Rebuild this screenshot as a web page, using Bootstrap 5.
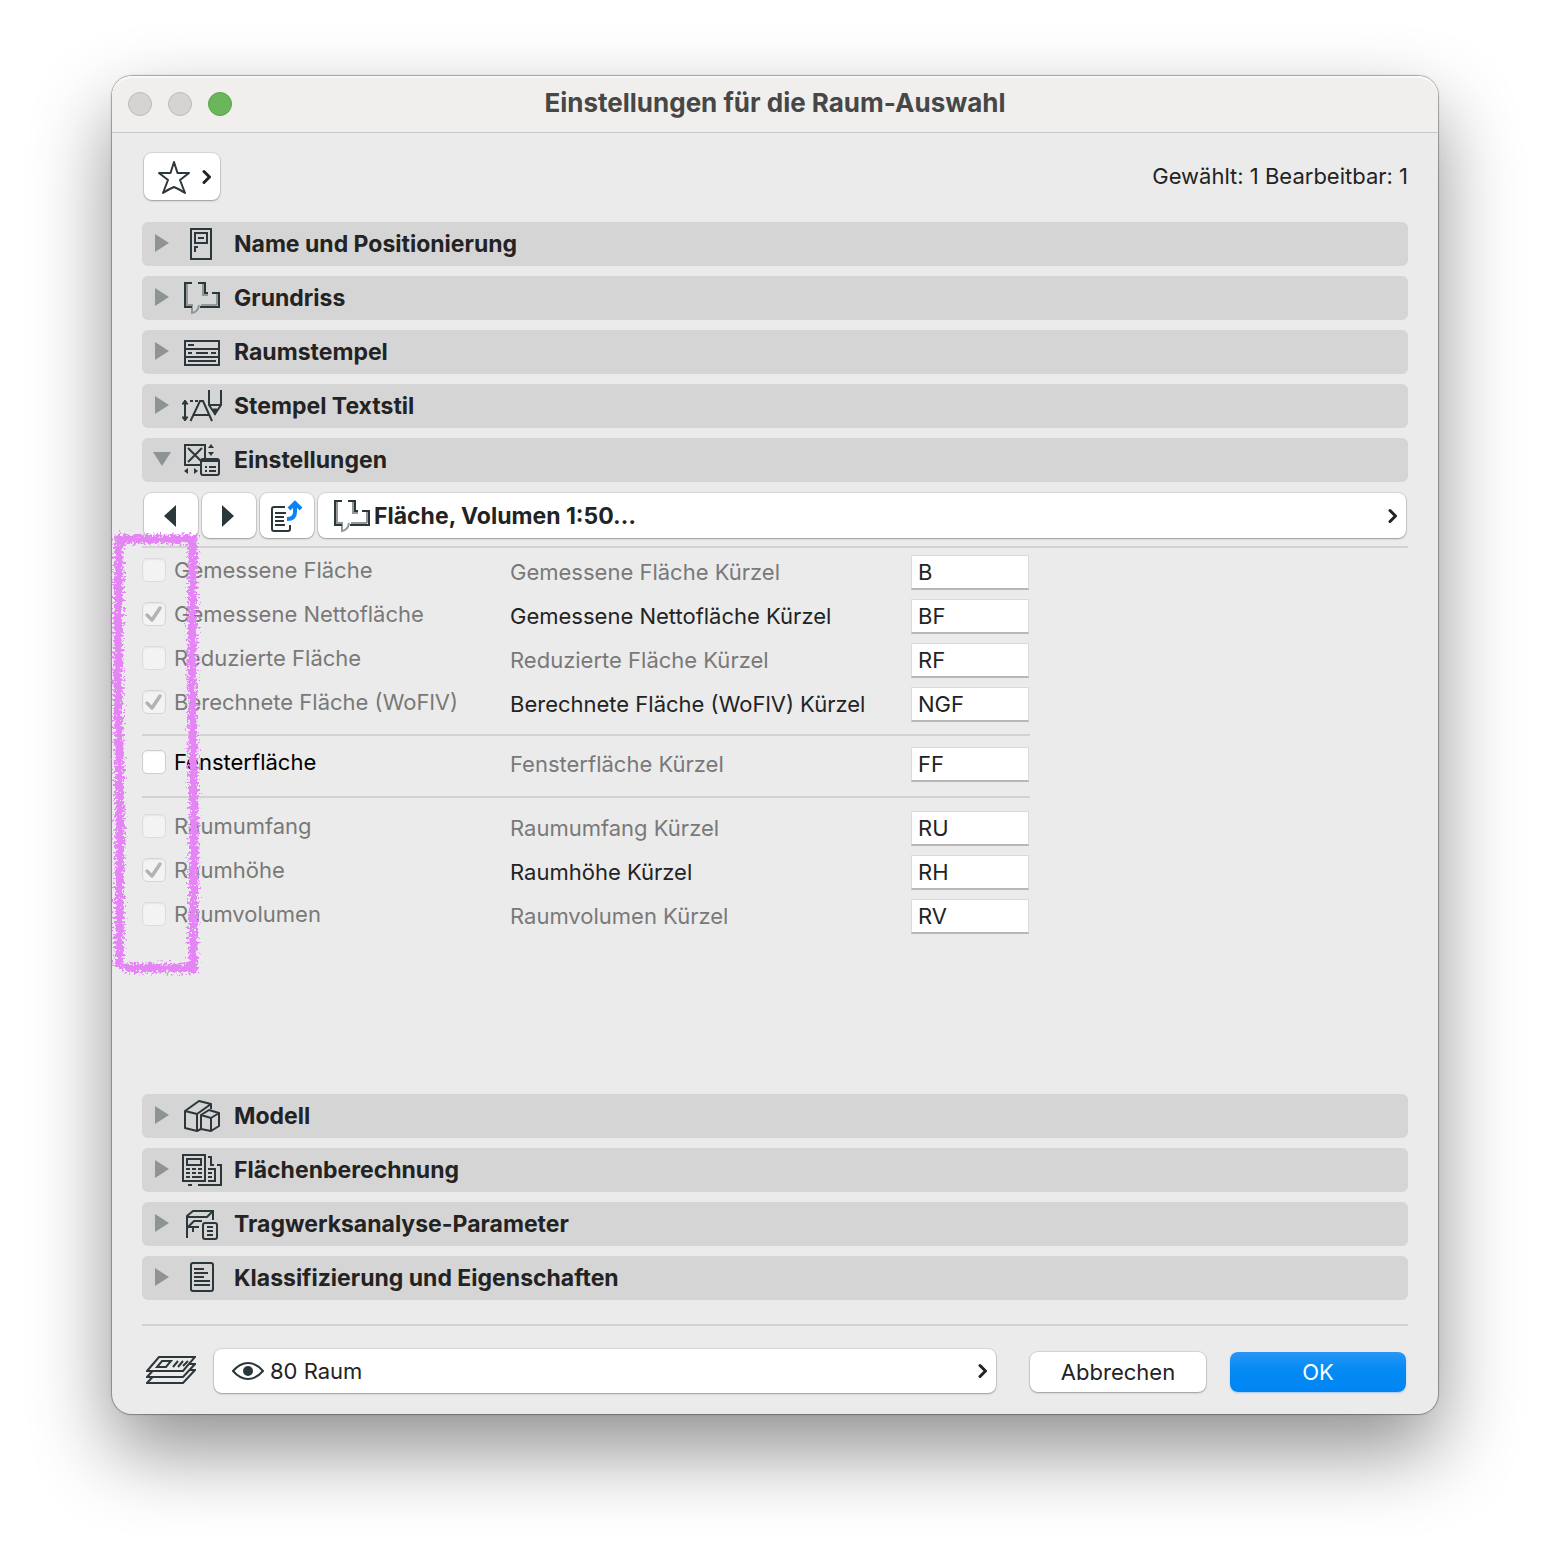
<!DOCTYPE html>
<html lang="de">
<head>
<meta charset="utf-8">
<meta name="viewport" content="width=device-width, initial-scale=1">
<title>Einstellungen für die Raum-Auswahl</title>
<link href="https://cdn.jsdelivr.net/npm/bootstrap@5.3.0/dist/css/bootstrap.min.css" rel="stylesheet">
<style>
  body { font-family: Inter, "Liberation Sans", sans-serif; font-size: 22px; line-height: 28px; color: #232323; background: #fff; padding: 76px 112px 148px; }
  .dialog { background: #ebebeb; border-radius: 20px; box-shadow: 0 0 0 1px rgba(0,0,0,.22), 0 0 3px rgba(0,0,0,.25), 0 36px 80px rgba(0,0,0,.44); }
  .titlebar { height: 57px; padding: 0 16px; background: #f0efed; border-bottom: 1px solid #c6c7c7; border-radius: 20px 20px 0 0; box-shadow: inset 0 2px 0 #f9f8f7; }
  .titlebar h1 { font-size: 26px; line-height: 32px; font-weight: 650; color: #474747; padding-bottom: 2px; }
  .light { width: 24px; height: 24px; border-radius: 50%; background: #d5d4d2; border: 1px solid #bcbbb9; padding: 0; }
  .light-zoom { background: #69b75a; border-color: #57a34a; }
  .lights { gap: 16px; width: 120px; }
  .dialog-body { padding: 20px 30px 21px; }
  .ctl { background: #fff; border: 0; border-radius: 8px; color: #232323; box-shadow: 0 0 0 1px rgba(0,0,0,.09), 0 1px 2px rgba(0,0,0,.28); padding: 0; }
  .fav { width: 76px; height: 47px; padding: 2px 8px 0 13px; margin-left: 2px; }
  .top-row { height: 46px; margin-bottom: 23px; }
  .bar { height: 44px; width: 100%; border: 0; border-radius: 6px; background: #d5d5d5; color: #232323; font-size: 23px; font-weight: 650; padding: 0 12px; text-align: left; }
  .bar .tri { width: 16px; height: 22px; padding-bottom: 2px; margin-right: 12px; flex: none; overflow: visible; }
  .bar .ico { width: 40px; height: 36px; margin-right: 12px; flex: none; }
  .stack { gap: 10px; }
  svg { display: block; }
  .ico, .line { fill: none; stroke: #2c373c; stroke-width: 2; }
  .tools { height: 46px; gap: 4px; padding: 0 2px; margin: 11px 0 7px; }
  .tool { width: 54px; height: 45px; }
  .page-pick { height: 45px; font-size: 23px; font-weight: 650; padding: 0 8px 0 14px; }
  .page-pick .ico { width: 42px; height: 36px; padding-right: 2px; }
  .rule { height: 2px; margin: 0; border: 0; background: #d2d2d2; opacity: 1; }
  .params { padding-top: 2px; padding-bottom: 156px; }
  .param-list { max-width: 888px; }
  .prow { height: 44px; }
  .prow .c1 { width: 368px; gap: 8px; padding-bottom: 4px; }
  .prow .c2 { width: 401px; }
  .off, .prow .c1.off label { color: #797979; }
  .on label { color: #000; }
  .box.form-check-input { width: 24px; height: 24px; margin: 0; border-radius: 5px; border: 1px solid #dcdcdc; background-color: #f3f3f3; opacity: 1; box-shadow: inset 0 1px 2px rgba(0,0,0,.06); }
  .box.form-check-input:disabled ~ label { opacity: 1; }
  .on .box.form-check-input { background-color: #fff; border-color: #cdcdcd; }
  .box.form-check-input:checked { background-color: #f3f3f3; border-color: #d6d6d6; background-size: 22px 22px; background-position: center; background-image: url("data:image/svg+xml,%3Csvg xmlns='http://www.w3.org/2000/svg' viewBox='0 0 22 22'%3E%3Cpath d='M4 12l5 5 8-12' fill='none' stroke='%23b3b3b3' stroke-width='3.500' stroke-linecap='round' stroke-linejoin='round'/%3E%3C/svg%3E"); }
  .abbr.form-control { width: 118px; height: 35px; padding: 0 6px; border: 1px solid #dadada; border-bottom: 2px solid #b7b7b7; border-radius: 0; background: #fff; color: #232323; font-size: 22px; line-height: 28px; }
  .sep-a { margin: 8px 0 6px; }
  .sep-b { margin: 10px 0 8px; }
  .foot { margin-top: 23px; padding: 0 2px 0 4px; }
  .layer { height: 44px; padding: 0 8px 0 18px; margin: 0 34px 0 18px; gap: 6px; }
  .act { width: 176px; height: 40px; }
  .acts { gap: 24px; padding-top: 2px; }
  .act-ok { color: #fff; background: linear-gradient(#2896f6, #038af5 45%, #0185f2); box-shadow: 0 1px 2px rgba(0,122,255,.3); }
  /* hand-drawn highlight lying over the tick boxes */
  .marker { position: absolute; left: -8px; top: 446px; pointer-events: none; }
</style>
</head>
<body>
<svg width="0" height="0" class="position-absolute" aria-hidden="true">
  <defs>
    <symbol id="tri-r" viewBox="0 0 16 20"><path d="M1 1L15 10L1 19Z" fill="#8e9396" stroke="none"/></symbol>
    <symbol id="chev" viewBox="0 0 10 16"><path d="M2 2.500L7.500 8L2 13.500" fill="none" stroke="#232323" stroke-width="3" stroke-linecap="round" stroke-linejoin="round"/></symbol>
    <symbol id="plan" viewBox="0 0 40 36">
      <path d="M5 4V25H11M21 4V15H26M35 14V25M19 25H35M10 25V33Q16 32 17 25" stroke="#93999b"/>
      <path d="M10 3H3V27H10M16 3H23V13H26M30 13H37V27H18"/>
    </symbol>
  </defs>
</svg>

<main class="dialog position-relative">
  <header class="titlebar d-flex align-items-center">
    <div class="lights d-flex">
      <button class="light" type="button" aria-label="Schließen"></button>
      <button class="light" type="button" aria-label="Minimieren"></button>
      <button class="light light-zoom" type="button" aria-label="Vergrößern"></button>
    </div>
    <h1 class="flex-grow-1 text-center m-0">Einstellungen für die Raum-Auswahl</h1>
    <div class="lights"></div>
  </header>

  <div class="dialog-body">
    <div class="top-row d-flex justify-content-between align-items-center">
      <button class="ctl fav d-flex align-items-center justify-content-between" type="button" aria-label="Favoriten">
        <svg class="line" width="34" height="34" viewBox="0 0 34 34"><path d="M17 2L20.500 13H32L23 20L28 33Q22 29 17 27Q12 29 6 33L11 20L2 13H13.500Z" stroke-linejoin="round"/></svg>
        <svg width="10" height="16"><use href="#chev"/></svg>
      </button>
      <div>Gewählt: 1 Bearbeitbar: 1</div>
    </div>

    <div class="stack d-flex flex-column">
      <button class="bar d-flex align-items-center" type="button" aria-expanded="false">
        <svg class="tri"><use href="#tri-r"/></svg>
        <svg class="ico" viewBox="0 0 40 36"><path d="M9 3H29V33H9ZM13 7H25V17H13ZM16 12H22M13 26V21H16"/></svg>
        Name und Positionierung</button>
      <button class="bar d-flex align-items-center" type="button" aria-expanded="false">
        <svg class="tri"><use href="#tri-r"/></svg>
        <svg class="ico"><use href="#plan"/></svg>
        Grundriss</button>
      <button class="bar d-flex align-items-center" type="button" aria-expanded="false">
        <svg class="tri"><use href="#tri-r"/></svg>
        <svg class="ico" viewBox="0 0 40 36"><path d="M3 7H37V31H3ZM3 15H37M3 23H37M6 11H12M6 19H10M14 19H26M29 19H34M6 27H34"/></svg>
        Raumstempel</button>
      <button class="bar d-flex align-items-center" type="button" aria-expanded="false">
        <svg class="tri"><use href="#tri-r"/></svg>
        <svg class="ico" viewBox="0 0 40 36"><path d="M3 13V32M8 13H11M13 13H16M8.500 33L18 13H21L30 33M12 27H27M27 2V17L33 26L39 17V2M27 17H39"/><path d="M0 16L3 12L6 16ZM0 29L3 33L6 29ZM31 21H35L33 27Z" fill="#2c373c" stroke-width="1"/></svg>
        Stempel Textstil</button>
      <button class="bar d-flex align-items-center" type="button" aria-expanded="true">
        <svg class="tri" viewBox="0 0 16 20"><path d="M-1 3H17L8 17Z" fill="#8e9396"/></svg>
        <svg class="ico" viewBox="0 0 40 36"><path d="M3 3H23V23H3ZM6 6L20 20M20 6L6 20"/><rect x="19" y="17" width="18" height="16" rx="2" fill="#d5d5d5"/><path d="M19 19H37M23 25H25M27 25H34M23 29H25M27 29H34"/><path d="M26 6L29 2L32 6ZM26 10H32L29 14ZM6 26V32L2 29ZM12 26V32L16 29Z" fill="#2c373c" stroke="none"/></svg>
        Einstellungen</button>
    </div>

    <div class="tools d-flex">
      <button class="ctl tool d-flex align-items-center justify-content-center" type="button" aria-label="Vorherige Seite"><svg width="16" height="22"><path d="M13 0V22L1 11Z" fill="#2c373c"/></svg></button>
      <button class="ctl tool d-flex align-items-center justify-content-center" type="button" aria-label="Nächste Seite"><svg width="16" height="22"><path d="M1 0V22L13 11Z" fill="#2c373c"/></svg></button>
      <button class="ctl tool d-flex align-items-center justify-content-center" type="button" aria-label="Seite übertragen">
        <svg class="line" width="34" height="34" viewBox="0 0 34 34"><path d="M15 8H4Q2 8 2 10V30Q2 32 4 32H18Q20 32 20 30V26M5 14H16M5 18H14M5 22H14M5 26H15"/><path d="M17 20Q25 20 25 13V6M19 10L25 4L31 10" stroke="#0a84f5" stroke-width="4"/></svg>
      </button>
      <button class="ctl page-pick flex-grow-1 d-flex align-items-center" type="button">
        <svg class="ico"><use href="#plan"/></svg>
        Fläche, Volumen 1:50…
        <svg class="ms-auto" width="10" height="16"><use href="#chev"/></svg>
      </button>
    </div>
    <hr class="rule">

    <div class="params">
      <div class="param-list">
        <div class="prow d-flex align-items-center"><div class="c1 off d-flex align-items-center"><input class="form-check-input box" type="checkbox" id="k1" disabled><label for="k1">Gemessene Fläche</label></div><label class="c2 off" for="a1">Gemessene Fläche Kürzel</label><input class="form-control abbr" id="a1" type="text" value="B"></div>
        <div class="prow d-flex align-items-center"><div class="c1 off d-flex align-items-center"><input class="form-check-input box" type="checkbox" id="k2" checked disabled><label for="k2">Gemessene Nettofläche</label></div><label class="c2" for="a2">Gemessene Nettofläche Kürzel</label><input class="form-control abbr" id="a2" type="text" value="BF"></div>
        <div class="prow d-flex align-items-center"><div class="c1 off d-flex align-items-center"><input class="form-check-input box" type="checkbox" id="k3" disabled><label for="k3">Reduzierte Fläche</label></div><label class="c2 off" for="a3">Reduzierte Fläche Kürzel</label><input class="form-control abbr" id="a3" type="text" value="RF"></div>
        <div class="prow d-flex align-items-center"><div class="c1 off d-flex align-items-center"><input class="form-check-input box" type="checkbox" id="k4" checked disabled><label for="k4">Berechnete Fläche (WoFlV)</label></div><label class="c2" for="a4">Berechnete Fläche (WoFlV) Kürzel</label><input class="form-control abbr" id="a4" type="text" value="NGF"></div>
        <hr class="rule sep-a">
        <div class="prow d-flex align-items-center"><div class="c1 on d-flex align-items-center"><input class="form-check-input box" type="checkbox" id="k5"><label for="k5">Fensterfläche</label></div><label class="c2 off" for="a5">Fensterfläche Kürzel</label><input class="form-control abbr" id="a5" type="text" value="FF"></div>
        <hr class="rule sep-b">
        <div class="prow d-flex align-items-center"><div class="c1 off d-flex align-items-center"><input class="form-check-input box" type="checkbox" id="k6" disabled><label for="k6">Raumumfang</label></div><label class="c2 off" for="a6">Raumumfang Kürzel</label><input class="form-control abbr" id="a6" type="text" value="RU"></div>
        <div class="prow d-flex align-items-center"><div class="c1 off d-flex align-items-center"><input class="form-check-input box" type="checkbox" id="k7" checked disabled><label for="k7">Raumhöhe</label></div><label class="c2" for="a7">Raumhöhe Kürzel</label><input class="form-control abbr" id="a7" type="text" value="RH"></div>
        <div class="prow d-flex align-items-center"><div class="c1 off d-flex align-items-center"><input class="form-check-input box" type="checkbox" id="k8" disabled><label for="k8">Raumvolumen</label></div><label class="c2 off" for="a8">Raumvolumen Kürzel</label><input class="form-control abbr" id="a8" type="text" value="RV"></div>
      </div>
    </div>

    <div class="stack d-flex flex-column">
      <button class="bar d-flex align-items-center" type="button" aria-expanded="false">
        <svg class="tri"><use href="#tri-r"/></svg>
        <svg class="ico" viewBox="0 0 40 36" stroke-linejoin="round"><path d="M19 31L15 33L3 30V13L17 3L29 6V11M3 13L15 16L29 6M15 16V33"/><path d="M19 17L27 12L37 15V28L29 33L19 31ZM19 17L29 20L37 15M29 20V33"/></svg>
        Modell</button>
      <button class="bar d-flex align-items-center" type="button" aria-expanded="false">
        <svg class="tri"><use href="#tri-r"/></svg>
        <svg class="ico" viewBox="0 0 40 36"><path d="M1 3H23V29H1ZM5 7H19V13H5ZM4 17H8M10 17H14M16 17H20M4 21H8M10 21H14M16 21H20M4 25H8M10 25H20M26 5H29V13H32M35 13H39V33H16M6 33H10M26 17H33V29H26M26 21H30M26 25H30"/></svg>
        Flächenberechnung</button>
      <button class="bar d-flex align-items-center" type="button" aria-expanded="false">
        <svg class="tri"><use href="#tri-r"/></svg>
        <svg class="ico" viewBox="0 0 40 36"><path d="M5 32V10L11 5H31V14M5 11H25L31 5M5 22L12 15H20M5 21H17M11 21V26"/><rect x="21" y="17" width="14" height="16" rx="2" fill="#d5d5d5"/><path d="M25 21H31M25 25H31M25 29H31"/></svg>
        Tragwerksanalyse-Parameter</button>
      <button class="bar d-flex align-items-center" type="button" aria-expanded="false">
        <svg class="tri"><use href="#tri-r"/></svg>
        <svg class="ico" viewBox="0 0 40 36"><rect x="9" y="3" width="22" height="28" rx="2"/><path d="M12 9H22M12 13H26M12 17H22M12 21H28M12 25H28"/></svg>
        Klassifizierung und Eigenschaften</button>
    </div>

    <hr class="rule mt-4">
    <footer class="foot d-flex align-items-center">
      <svg class="line flex-shrink-0" width="50" height="36" viewBox="0 0 50 36"><g fill="#ebebeb"><path d="M1 30L13 17H49L37 30Z"/><path d="M1 24L13 11H49L37 24Z"/><path d="M1 18L13 4H49L37 18Z"/></g><path d="M16 8H25L20 14H11ZM27 14L32 8M32 14L37 8M37 13L42 8"/></svg>
      <button class="ctl layer flex-grow-1 d-flex align-items-center" type="button">
        <svg class="line" width="32" height="20" viewBox="0 0 32 20"><path d="M1 10Q8 2 16 2T31 10Q24 18 16 18T1 10Z"/><circle cx="16" cy="10" r="5" fill="#2c373c" stroke="none"/></svg>
        80 Raum
        <svg class="ms-auto" width="10" height="16"><use href="#chev"/></svg>
      </button>
      <div class="acts d-flex">
        <button class="ctl act" type="button">Abbrechen</button>
        <button class="ctl act act-ok" type="submit">OK</button>
      </div>
    </footer>
  </div>

  <svg class="marker" width="104" height="464" viewBox="0 0 104 464" aria-hidden="true">
    <defs>
      <filter id="chalk" x="0" y="0" width="104" height="464" filterUnits="userSpaceOnUse">
        <feTurbulence type="fractalNoise" baseFrequency="0.4" numOctaves="2" seed="11" result="n"/>
        <feDisplacementMap in="SourceGraphic" in2="n" scale="13" xChannelSelector="R" yChannelSelector="G"/>
      </filter>
    </defs>
    <path d="M15 446L16 300L14 150L15 17H89L88 150L90 300L89 446H20" fill="none" stroke="#e584f4" stroke-width="9" filter="url(#chalk)"/>
  </svg>
</main>
<script src="https://cdn.jsdelivr.net/npm/bootstrap@5.3.0/dist/js/bootstrap.bundle.min.js"></script>
</body>
</html>
